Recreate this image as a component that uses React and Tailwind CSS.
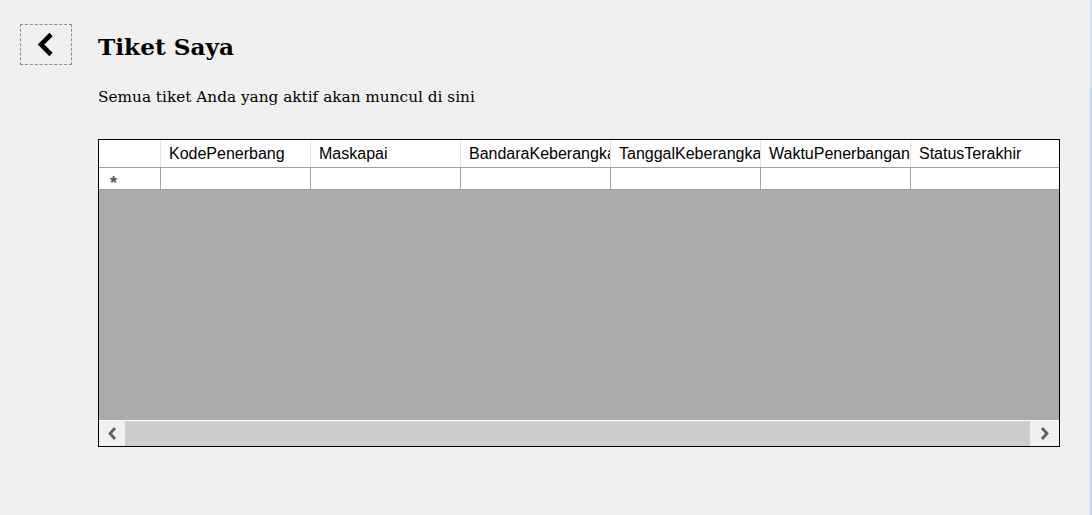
import React from "react";

const columns = [
  "KodePenerbang",
  "Maskapai",
  "BandaraKeberangkatan",
  "TanggalKeberangkatan",
  "WaktuPenerbangan",
  "StatusTerakhir",
];

function Chevron({ dir = "left", className }) {
  const d = dir === "left" ? "M7 1 L2 6.5 L7 12" : "M2 1 L7 6.5 L2 12";
  return (
    <svg width="9" height="13" viewBox="0 0 9 13" className={className}>
      <path d={d} fill="none" stroke="#606060" strokeWidth="2.8" />
    </svg>
  );
}

export default function App() {
  return (
    <div className="flex h-[515px] w-full bg-[#f0f0f0] overflow-hidden">
      <div className="flex-1 flex items-start pl-[20px] pt-[24px]">
        {/* Back button */}
        <button className="w-[52px] h-[41px] border border-dashed border-[#8c8c8c] flex items-center justify-center shrink-0">
          <svg width="20" height="26" viewBox="0 0 20 26">
            <path d="M15 2.5 L5 12.5 L15 22.5" fill="none" stroke="#000" strokeWidth="4.6" />
          </svg>
        </button>

        <div className="ml-[26px] mt-[9px] flex flex-col">
          <h1 className="font-['DejaVu_Serif',serif] font-bold text-[23.2px] leading-[28px] text-black">
            Tiket Saya
          </h1>
          <p className="mt-[26px] font-['DejaVu_Serif',serif] text-[15.3px] leading-[20px] text-black">
            Semua tiket Anda yang aktif akan muncul di sini
          </p>

          {/* Data grid */}
          <div className="mt-[32px] w-[962px] h-[308px] border border-black flex flex-col overflow-hidden bg-[#ababab] font-['Liberation_Sans',Arial,sans-serif]">
            {/* Header row */}
            <div className="flex h-[28px] shrink-0 bg-white border-b border-[#a0a0a0]">
              <div className="w-[62px] shrink-0 border-r border-[#e3e3e3]" />
              {columns.map((c) => (
                <div
                  key={c}
                  className="w-[150px] shrink-0 border-r border-[#e3e3e3] pl-[8px] text-[16px] leading-[27px] text-black overflow-hidden whitespace-nowrap"
                >
                  {c}
                </div>
              ))}
            </div>
            {/* New row */}
            <div className="flex h-[22px] shrink-0 border-b border-[#a0a0a0]">
              <div className="w-[62px] shrink-0 bg-white border-r border-[#a0a0a0] pl-[11px] pt-[7px] text-[18px] leading-[17px] font-bold text-[#555]">
                *
              </div>
              {columns.map((c) => (
                <div key={c} className="w-[150px] shrink-0 bg-white border-r border-[#a0a0a0]" />
              ))}
            </div>
            {/* Empty area */}
            <div className="flex-1" />
            {/* Horizontal scrollbar */}
            <div className="h-[26px] shrink-0 border-t border-white flex">
              <div className="w-[26px] bg-[#f0f0f0] flex items-center justify-center">
                <Chevron dir="left" />
              </div>
              <div className="flex-1 bg-[#cdcdcd]" />
              <div className="w-[29px] bg-[#f0f0f0] flex items-center justify-center">
                <Chevron dir="right" />
              </div>
            </div>
          </div>
        </div>
      </div>
      {/* Right edge strip */}
      <div className="w-[2px] flex flex-col shrink-0">
        <div className="h-[88px] bg-[#d3e2f3]" />
        <div className="flex-1 bg-[#bfd5ee]" />
      </div>
    </div>
  );
}
